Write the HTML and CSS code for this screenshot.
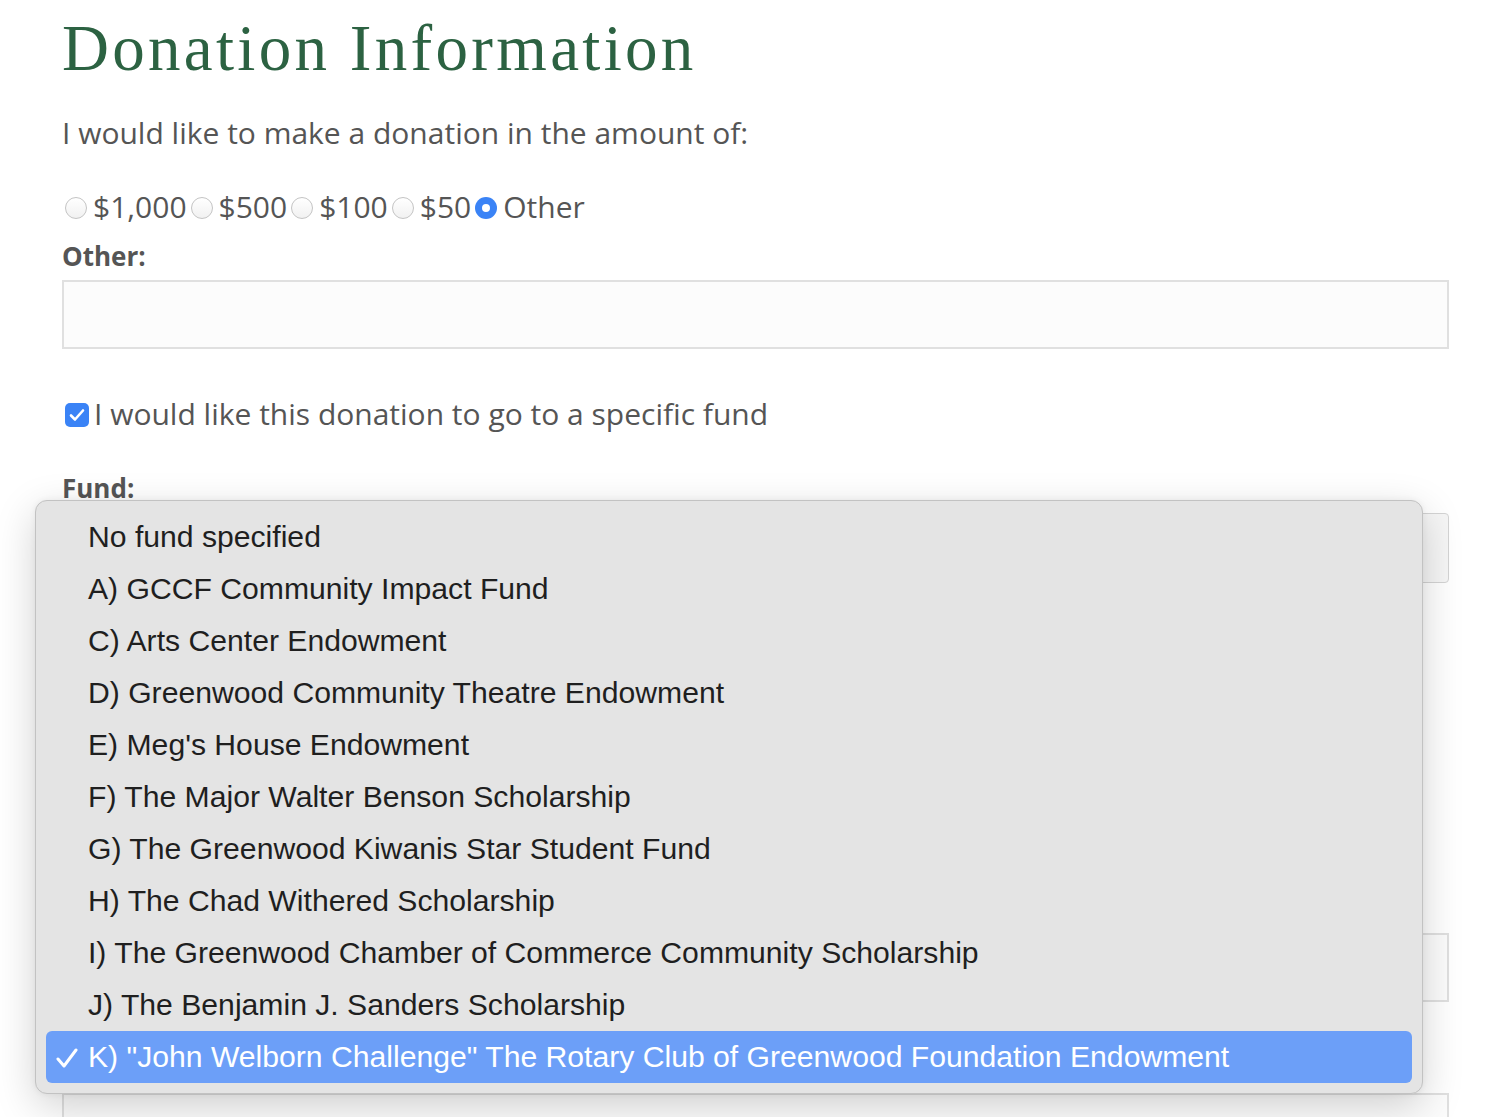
FILE: index.html
```html
<!DOCTYPE html>
<html lang="en">
<head>
    <meta charset="UTF-8">
    <meta name="viewport" content="width=device-width, initial-scale=1.0">
    <title>Donation Information</title>
    <link rel="stylesheet" href="styles.css">
</head>
<body>
    <div class="container">
        <h1>Donation Information</h1>
        <p class="intro">I would like to make a donation in the amount of:</p>

        <div class="amounts">
            <label class="radio"><input type="radio" name="amount" value="1000"><span>$1,000</span></label>
            <label class="radio"><input type="radio" name="amount" value="500"><span>$500</span></label>
            <label class="radio"><input type="radio" name="amount" value="100"><span>$100</span></label>
            <label class="radio"><input type="radio" name="amount" value="50"><span>$50</span></label>
            <label class="radio"><input type="radio" name="amount" value="other" checked><span>Other</span></label>
        </div>

        <label class="field-label" for="otherAmount">Other:</label>
        <input type="text" id="otherAmount" class="text-input">

        <label class="check-row">
            <span class="checkbox">
                <svg width="16" height="14" viewBox="0 0 16 14"><path d="M2 7.5 L6 11.5 L14 2.5" fill="none" stroke="#fff" stroke-width="2.6" stroke-linecap="round" stroke-linejoin="round"/></svg>
            </span>
            <span>I would like this donation to go to a specific fund</span>
        </label>

        <div class="fund-field">
            <label class="field-label">Fund:</label>
            <div class="select-box"></div>

            <div class="fund-menu">
                <div class="menu-item">No fund specified</div>
                <div class="menu-item">A) GCCF Community Impact Fund</div>
                <div class="menu-item">C) Arts Center Endowment</div>
                <div class="menu-item">D) Greenwood Community Theatre Endowment</div>
                <div class="menu-item">E) Meg's House Endowment</div>
                <div class="menu-item">F) The Major Walter Benson Scholarship</div>
                <div class="menu-item">G) The Greenwood Kiwanis Star Student Fund</div>
                <div class="menu-item">H) The Chad Withered Scholarship</div>
                <div class="menu-item">I) The Greenwood Chamber of Commerce Community Scholarship</div>
                <div class="menu-item">J) The Benjamin J. Sanders Scholarship</div>
                <div class="menu-item selected">
                    <svg class="tick" width="22" height="20" viewBox="0 0 22 20"><path d="M2 11 L8 18 L20 2" fill="none" stroke="#fff" stroke-width="3" stroke-linecap="round" stroke-linejoin="round"/></svg>
                    K) "John Welborn Challenge" The Rotary Club of Greenwood Foundation Endowment
                </div>
            </div>
        </div>

        <div class="hidden-fields">
            <input type="text" class="text-input">
            <input type="text" class="text-input second">
        </div>
    </div>
</body>
</html>
```

FILE: styles.css
```css
body {
    margin: 0;
    background-color: #fff;
    font-family: "Open Sans", "Liberation Sans", sans-serif;
    color: #555;
    overflow: hidden;
}
.container {
    padding: 0 44px 0 62px;
}
h1 {
    font-family: "Liberation Serif", serif;
    font-weight: normal;
    font-size: 65px;
    letter-spacing: 3.3px;
    line-height: 1;
    color: #2c6242;
    margin: 0;
    padding-top: 16px;
}
.intro {
    font-size: 30px;
    line-height: 40px;
    margin: 32px 0 0;
}
.amounts {
    display: flex;
    align-items: center;
    margin-top: 34px;
    font-size: 30px;
    line-height: 40px;
}
.radio {
    display: flex;
    align-items: center;
}
.radio input {
    appearance: none;
    -webkit-appearance: none;
    width: 22px;
    height: 22px;
    margin: 2px 6px 0 3px;
    border: 1px solid #c4c4c4;
    border-radius: 50%;
    background: linear-gradient(#fff, #f1f1f1);
}
.radio + .radio input {
    margin-left: 4px;
}
.radio input:checked {
    border: none;
    background: #fff;
    box-shadow: inset 0 0 0 7px #3a83f6;
}
.field-label {
    display: block;
    font-size: 26px;
    font-weight: bold;
    line-height: 36px;
    margin-top: 11px;
}
.text-input {
    display: block;
    box-sizing: border-box;
    width: 100%;
    height: 69px;
    margin-top: 6px;
    border: 2px solid #e0e0e0;
    background: #fcfcfc;
}
.check-row {
    display: flex;
    align-items: center;
    font-size: 30px;
    line-height: 40px;
    margin-top: 45px;
}
.checkbox {
    display: flex;
    align-items: center;
    justify-content: center;
    width: 24px;
    height: 24px;
    margin: 2px 5px 0 3px;
    border-radius: 5px;
    background: #3a83f6;
}
.fund-field {
    position: relative;
    margin-top: 36px;
}
.fund-field .field-label {
    margin-top: 0;
}
.select-box {
    height: 70px;
    margin-top: 7px;
    border: 1px solid #d4d4d4;
    border-radius: 4px;
    background: #f6f6f6;
    box-sizing: border-box;
}
.fund-menu {
    position: absolute;
    left: -27px;
    top: 30px;
    z-index: 10;
    width: 1388px;
    box-sizing: border-box;
    padding: 10px;
    background: #e4e4e4;
    border: 1px solid #c2c2c2;
    border-radius: 12px;
    box-shadow: 0 12px 40px rgba(0, 0, 0, 0.18), 0 0 6px rgba(0, 0, 0, 0.06);
    font-family: "Liberation Sans", Arial, sans-serif;
    font-size: 30.15px;
    color: #1f1f1f;
}
.menu-item {
    height: 52px;
    line-height: 52px;
    padding-left: 42px;
    white-space: nowrap;
    border-radius: 6px;
}
.menu-item.selected {
    position: relative;
    background: #6c9ff8;
    color: #fff;
}
.tick {
    position: absolute;
    left: 10px;
    top: 17px;
}
.hidden-fields {
    margin-top: 350px;
}
.hidden-fields .second {
    margin-top: 91px;
}
```
